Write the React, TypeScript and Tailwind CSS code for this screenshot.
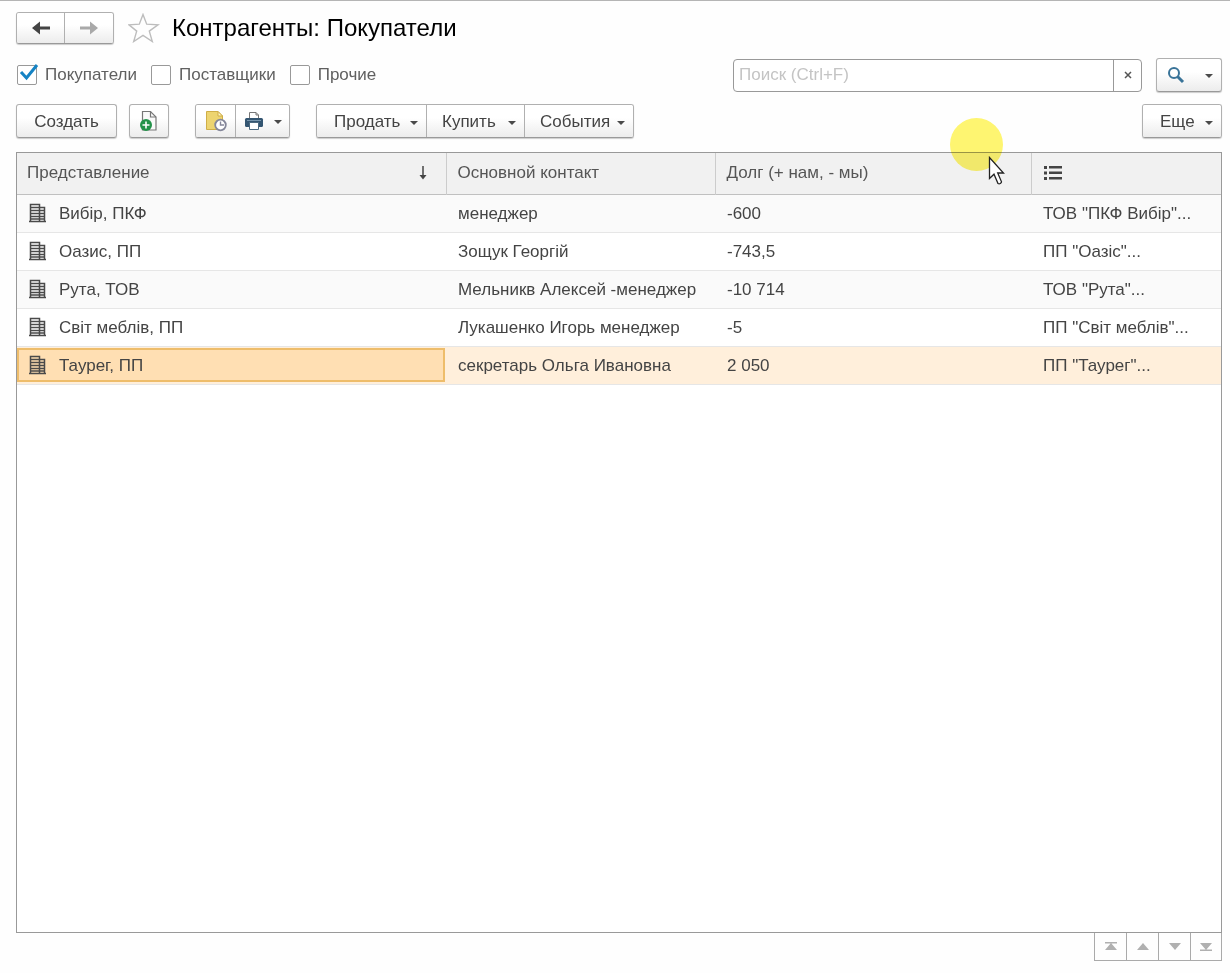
import type { ReactNode } from "react"

const filters = [
  { id: "buyers", label: "Покупатели", checked: true },
  { id: "suppliers", label: "Поставщики", checked: false },
  { id: "others", label: "Прочие", checked: false },
]

const rows = [
  { name: "Вибір, ПКФ", contact: "менеджер", debt: "-600", full: 'ТОВ "ПКФ Вибір"...' },
  { name: "Оазис, ПП", contact: "Зощук Георгій", debt: "-743,5", full: 'ПП "Оазіс"...' },
  { name: "Рута, ТОВ", contact: "Мельникв Алексей -менеджер", debt: "-10 714", full: 'ТОВ "Рута"...' },
  { name: "Світ меблів, ПП", contact: "Лукашенко Игорь менеджер", debt: "-5", full: 'ПП "Світ меблів"...' },
  { name: "Таурег, ПП", contact: "секретарь Ольга Ивановна", debt: "2 050", full: 'ПП "Таурег"...', selected: true },
]

const buttonBase =
  "flex items-center justify-center bg-gradient-to-b from-white from-40% to-[#ececec] text-[#444444]"
const buttonFrame = "rounded-[3px] border border-[#b0b0b0] border-b-[#999999] shadow-[0_1px_1px_#cccccc]"

function Caret() {
  return (
    <svg width="8" height="4" viewBox="0 0 8 4" className="mt-0.5 shrink-0" aria-hidden="true">
      <path d="M0 0h8L4 4z" fill="#4a4a4a" />
    </svg>
  )
}

function ButtonGroup({ children }: { children: ReactNode }) {
  return <div className={`flex overflow-hidden divide-x divide-[#b0b0b0] ${buttonFrame}`}>{children}</div>
}

function ArrowIcon({ forward = false }: { forward?: boolean }) {
  return (
    <svg width="20" height="14" viewBox="0 0 20 14" aria-hidden="true">
      {forward ? (
        <path d="M1 5.500h10V.5L19 7l-8 6.500v-5H1z" fill="#a9a9a9" />
      ) : (
        <path d="M19 5.500H9V.5L1 7l8 6.500v-5h10z" fill="#444" />
      )}
    </svg>
  )
}

function StarIcon() {
  return (
    <svg width="32" height="30" viewBox="0 0 32 30" fill="none" aria-hidden="true">
      <path
        d="M15 1.500l3.700 9.700 11.300.6-8.700 6.300 3 10.400L15 22.400 5.700 28.500l3-10.400L1 11.800l10.300-.6z"
        stroke="#bdbdbd"
        strokeWidth="1.400"
      />
    </svg>
  )
}

function AddDocIcon() {
  return (
    <svg width="20" height="22" viewBox="0 0 20 22" fill="none" aria-hidden="true">
      <path d="M3.500 1.500h8L17 7v13H3.500z" fill="#fafafa" stroke="#777" strokeWidth="1.200" />
      <path d="M11.500 1.500V7H17" stroke="#777" strokeWidth="1.200" />
      <circle cx="7" cy="15" r="6" fill="#24934a" />
      <path d="M7 11.500v7M3.500 15h7" stroke="#fff" strokeWidth="1.600" />
    </svg>
  )
}

function HistoryDocIcon() {
  return (
    <svg width="22" height="22" viewBox="0 0 22 22" fill="none" aria-hidden="true">
      <path d="M1.500 1.500H13L17.500 6v13.500h-16z" fill="#edd470" stroke="#cfae48" />
      <path d="M13 1.500V6h4.500z" fill="#fff4c4" stroke="#cfae48" />
      <circle cx="15.500" cy="15" r="5.300" fill="#fff" stroke="#85879a" strokeWidth="1.800" />
      <path d="M15.500 11.500V15H19" stroke="#85879a" strokeWidth="1.400" />
    </svg>
  )
}

function PrinterIcon() {
  return (
    <svg width="20" height="20" viewBox="0 0 20 20" fill="none" aria-hidden="true">
      <path d="M5.500 8V1.500H12L14.500 4v4" fill="#fff" stroke="#777" />
      <path d="M12 1.500V4h2.500" stroke="#777" />
      <rect x="1" y="7" width="18" height="9" rx="1.500" fill="#335571" />
      <path d="M3 9.500h14" stroke="#7896ad" />
      <path d="M5.500 11.500h9v7h-9z" fill="#fff" stroke="#4b687f" />
    </svg>
  )
}

function BuildingIcon() {
  return (
    <svg width="18" height="20" viewBox="0 0 18 20" fill="none" className="shrink-0" aria-hidden="true">
      <path
        d="M1.500 19V1.500h9V19M10.500 4.500h5V19M0 18.500h17"
        stroke="#4a4a4a"
        strokeWidth="1.500"
      />
      <path
        d="M2 4.500h8M2 7.500h8M2 10.500h8M2 13.500h8M2 16h8M11 7.500h5M11 10.500h5M11 13.500h5M11 16h5"
        stroke="#4a4a4a"
        strokeWidth="1.400"
      />
    </svg>
  )
}

function MenuButton({ label, className = "" }: { label: string; className?: string }) {
  return (
    <button type="button" className={`${buttonBase} h-8 pt-0.5 pr-2 ${className}`}>
      <span className="mr-auto">{label}</span>
      <Caret />
    </button>
  )
}

const pagerIcons = [
  { label: "В начало", d: "M1 0h12v1.500H1zM7 1l6 7H1z" },
  { label: "Вверх", d: "M7 1l6 7H1z" },
  { label: "Вниз", d: "M1 1h12L7 8z" },
  { label: "В конец", d: "M1 1h12L7 8zM1 7.500h12V9H1z" },
]

export default function App() {
  return (
    <main className="relative flex min-h-screen flex-col border-t border-[#b5b5b5] bg-[#fefefe] pt-[11px] pr-2 pb-3 pl-4 font-['Liberation_Sans',Arial,sans-serif] text-[17px] leading-5 text-[#444444]">
      {/* Title bar */}
      <header className="flex h-8 items-center">
        <ButtonGroup>
          <button type="button" aria-label="Назад" className={`${buttonBase} h-[30px] w-12`}>
            <ArrowIcon />
          </button>
          <button type="button" aria-label="Вперед" className={`${buttonBase} h-[30px] w-12`}>
            <ArrowIcon forward />
          </button>
        </ButtonGroup>
        <button type="button" aria-label="В избранное" className="ml-3.5">
          <StarIcon />
        </button>
        <h1 className="ml-3 text-2xl text-black">Контрагенты: Покупатели</h1>
      </header>

      {/* Filters and search */}
      <div className="mt-3.5 flex h-[34px] items-center">
        <div className="flex items-center gap-3.5 pl-px">
          {filters.map((filter) => (
            <label key={filter.id} htmlFor={filter.id} className="flex items-center gap-2 text-[#606060]">
              <span className="relative flex">
                <input
                  id={filter.id}
                  type="checkbox"
                  defaultChecked={filter.checked}
                  className="peer size-5 appearance-none rounded-[2px] border border-[#999999] bg-white"
                />
                <svg
                  viewBox="0 0 22 22"
                  fill="none"
                  className="pointer-events-none absolute -top-0.5 left-0.5 hidden size-[22px] peer-checked:block"
                  aria-hidden="true"
                >
                  <path d="M2 9l5.500 6L18 2" stroke="#1583c4" strokeWidth="3" />
                </svg>
              </span>
              {filter.label}
            </label>
          ))}
        </div>
        <div className="ml-auto flex h-[33px] w-[409px] overflow-hidden rounded-[4px] border border-[#999999] bg-white">
          <input
            type="text"
            aria-label="Поиск"
            placeholder="Поиск (Ctrl+F)"
            className="min-w-0 flex-1 px-[5px] outline-none placeholder:text-[#c4c4c4]"
          />
          <button
            type="button"
            aria-label="Очистить"
            className="flex w-7 items-center justify-center border-l border-[#999999]"
          >
            <svg width="8" height="8" viewBox="0 0 8 8" aria-hidden="true">
              <path d="M1 1l6 6M7 1L1 7" stroke="#555" strokeWidth="1.500" />
            </svg>
          </button>
        </div>
        <button
          type="button"
          aria-label="Найти"
          className={`${buttonBase} ${buttonFrame} ml-3.5 h-[34px] w-[66px] gap-5 pl-0.5`}
        >
          <svg width="18" height="18" viewBox="0 0 18 18" fill="none" aria-hidden="true">
            <circle cx="7" cy="7" r="5" stroke="#397398" strokeWidth="2" />
            <path d="M10.500 10.500L16 16" stroke="#397398" strokeWidth="3" />
          </svg>
          <Caret />
        </button>
      </div>

      {/* Command bar */}
      <div className="mt-3 flex h-[34px] items-center">
        <button type="button" className={`${buttonBase} ${buttonFrame} h-[34px] w-[101px] pt-0.5`}>
          Создать
        </button>
        <button
          type="button"
          aria-label="Создать копированием"
          className={`${buttonBase} ${buttonFrame} ml-3 h-[34px] w-10`}
        >
          <AddDocIcon />
        </button>
        <div className="ml-[26px]">
          <ButtonGroup>
            <button type="button" aria-label="История" className={`${buttonBase} h-8 w-10`}>
              <HistoryDocIcon />
            </button>
            <button type="button" aria-label="Печать" className={`${buttonBase} h-8 w-[53px] gap-2.5`}>
              <PrinterIcon />
              <Caret />
            </button>
          </ButtonGroup>
        </div>
        <div className="ml-[26px]">
          <ButtonGroup>
            <MenuButton label="Продать" className="w-[110px] pl-[17px]" />
            <MenuButton label="Купить" className="w-[98px] pl-[15px]" />
            <MenuButton label="События" className="w-[108px] pl-[15px]" />
          </ButtonGroup>
        </div>
        <div className={`ml-auto overflow-hidden ${buttonFrame}`}>
          <MenuButton label="Еще" className="w-[78px] pl-[17px]" />
        </div>
      </div>

      {/* List */}
      <section className="mt-3.5 flex-1 border border-[#999999] bg-white">
        <table className="w-full table-fixed border-collapse text-left whitespace-nowrap">
          <colgroup>
            <col />
            <col className="w-[269px]" />
            <col className="w-[316px]" />
            <col className="w-[190px]" />
          </colgroup>
          <thead>
            <tr className="h-[41px] border-b border-[#c0c0c0] bg-[#f1f1f1] text-[#555555]">
              <th className="border-r border-[#cccccc] pr-[18px] pl-2.5 font-normal">
                <div className="flex items-center justify-between">
                  Представление
                  <svg width="10" height="14" viewBox="0 0 10 14" fill="none" aria-hidden="true">
                    <path d="M5 0v12" stroke="#444" strokeWidth="1.500" />
                    <path d="M1.500 9h7L5 13.500z" fill="#444" />
                  </svg>
                </div>
              </th>
              <th className="border-r border-[#cccccc] px-[11px] font-normal">Основной контакт</th>
              <th className="border-r border-[#cccccc] px-[11px] font-normal">Долг (+ нам, - мы)</th>
              <th className="px-3 font-normal" aria-label="Полное наименование">
                <svg width="18" height="14" viewBox="0 0 18 14" aria-hidden="true">
                  <path
                    d="M0 0h3v3H0zM5 0h13v2.500H5zM0 5.500h3v3H0zM5 5.500h13V8H5zM0 11h3v3H0zM5 11h13v2.500H5z"
                    fill="#444"
                  />
                </svg>
              </th>
            </tr>
          </thead>
          <tbody>
            {rows.map((row) => (
              <tr
                key={row.name}
                className={`h-[38px] border-b border-[#e6e6e6] ${
                  row.selected ? "bg-[#ffefdb]" : "odd:bg-[#fafafa]"
                }`}
              >
                <td className="pr-px">
                  <div
                    className={`flex h-[34px] items-center gap-3 border-2 pl-2.5 ${
                      row.selected ? "border-[#eebd6b] bg-[#ffdfb3]" : "border-transparent"
                    }`}
                  >
                    <BuildingIcon />
                    <span className="pt-px">{row.name}</span>
                  </div>
                </td>
                <td className="px-3 pt-px">{row.contact}</td>
                <td className="px-3 pt-px">{row.debt}</td>
                <td className="px-3 pt-px">{row.full}</td>
              </tr>
            ))}
          </tbody>
        </table>
      </section>

      {/* List navigation */}
      <nav className="flex justify-end">
        <div className="flex divide-x divide-[#aaaaaa] border-x border-b border-[#aaaaaa]">
          {pagerIcons.map((icon) => (
            <button
              key={icon.label}
              type="button"
              aria-label={icon.label}
              className="flex h-[27px] w-8 items-center justify-center last:w-[30px]"
            >
              <svg width="14" height="9" viewBox="0 0 14 9" aria-hidden="true">
                <path d={icon.d} fill="#b0b0b0" />
              </svg>
            </button>
          ))}
        </div>
      </nav>

      {/* Pointer with click highlight */}
      <div className="pointer-events-none absolute top-[117px] left-[950px] size-[53px] rounded-full bg-[#fff671] mix-blend-multiply" />
      <svg
        width="18"
        height="30"
        viewBox="0 0 18 30"
        className="pointer-events-none absolute top-[155px] left-[988px]"
        aria-hidden="true"
      >
        <path
          d="M1.500 1.500v21l4.500-4.300 4 9.300c1.500.8 3.500-.3 3.500-1.700L9.700 17H15.500z"
          fill="#fff"
          stroke="#222"
          strokeWidth="1.300"
        />
      </svg>
    </main>
  )
}
